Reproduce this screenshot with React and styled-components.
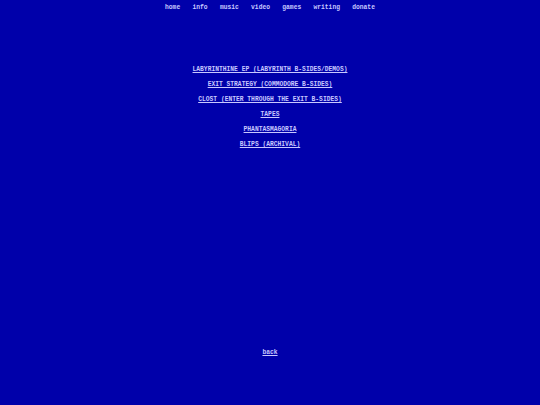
import React from 'react';
import styled, { createGlobalStyle } from 'styled-components';

const Global = createGlobalStyle`
  html, body {
    margin: 0;
    padding: 0;
    background: #0000aa;
  }
  body {
    font-family: "Liberation Mono", "DejaVu Sans Mono", monospace;
    color: #c8c8ff;
  }
`;

const Page = styled.div`
  height: 405px;
  display: flex;
  flex-direction: column;
  align-items: center;
`;

const Nav = styled.nav`
  display: flex;
  gap: 12.3px;
  padding-top: 4px;
  height: 8px;
`;

const NavLink = styled.a`
  font-size: 6.3px;
  font-weight: bold;
  line-height: 8px;
  color: #c8c8ff;
  text-decoration: none;
`;

const List = styled.ul`
  list-style: none;
  margin: 51px 0 0;
  padding: 0;
  display: flex;
  flex-direction: column;
  align-items: center;
  gap: 7px;
`;

const Item = styled.li`
  height: 8px;
  line-height: 8px;
`;

const Link = styled.a`
  font-size: 6.3px;
  font-weight: bold;
  line-height: 8px;
  color: #c8c8ff;
  text-decoration: underline;
`;

const Back = styled.div`
  margin-top: auto;
  margin-bottom: 48px;
  line-height: 8px;
`;

const nav = ['home', 'info', 'music', 'video', 'games', 'writing', 'donate'];
const releases = [
  'LABYRINTHINE EP (LABYRINTH B-SIDES/DEMOS)',
  'EXIT STRATEGY (COMMODORE B-SIDES)',
  'CLOST (ENTER THROUGH THE EXIT B-SIDES)',
  'TAPES',
  'PHANTASMAGORIA',
  'BLIPS (ARCHIVAL)',
];

export default function App() {
  return (
    <Page>
      <Global />
      <Nav>
        {nav.map((n) => (
          <NavLink key={n} href="#">{n}</NavLink>
        ))}
      </Nav>
      <List>
        {releases.map((r) => (
          <Item key={r}>
            <Link href="#">{r}</Link>
          </Item>
        ))}
      </List>
      <Back>
        <Link href="#">back</Link>
      </Back>
    </Page>
  );
}
